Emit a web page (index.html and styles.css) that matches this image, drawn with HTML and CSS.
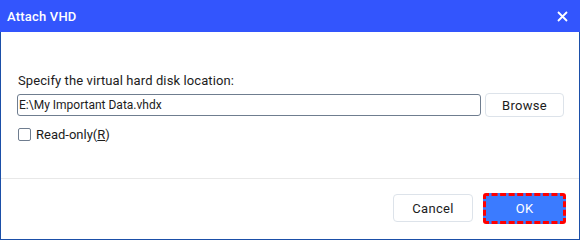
FILE: index.html
```html
<!DOCTYPE html>
<html lang="en">
  <head>
    <meta charset="UTF-8" />
    <meta name="viewport" content="width=device-width, initial-scale=1.0" />
    <title>Attach VHD</title>

    <link rel="stylesheet" href="styles.css">
  </head>

  <body>
    <div class="dialog">
      <div class="titlebar">
        <span class="title">Attach VHD</span>
        <button class="close" aria-label="Close">
          <svg width="11" height="11" viewBox="0 0 11 11">
            <path d="M1 1 L10 10 M10 1 L1 10" stroke="#ffffff" stroke-width="1.8" fill="none" />
          </svg>
        </button>
      </div>

      <div class="content">
        <div class="label">Specify the virtual hard disk location:</div>
        <div class="path-row">
          <input class="path" type="text" value="E:\My Important Data.vhdx" />
          <button class="btn">Browse</button>
        </div>
        <label class="check">
          <span class="box"></span>
          <span>Read-only(<u>R</u>)</span>
        </label>
      </div>

      <div class="footer">
        <button class="btn btn-cancel">Cancel</button>
        <button class="btn btn-ok">OK</button>
      </div>
    </div>
  </body>
</html>
```

FILE: styles.css
```css
body {
  margin: 0;
  background-color: #ffffff;
  font-family: Roboto, "Noto Sans", sans-serif;
  font-size: 13px;
  color: #1c1c1c;
}

.dialog {
  width: 580px;
  height: 240px;
  box-sizing: border-box;
  border: 1px solid #1b4fa8;
  border-top: none;
  display: flex;
  flex-direction: column;
}

.titlebar {
  height: 32px;
  margin: 0 -1px;
  padding: 0 10px 0 7px;
  background-color: #3355fd;
  color: white;
  display: flex;
  align-items: center;
  justify-content: space-between;
}

.title {
  font-size: 13px;
  font-weight: 500;
  letter-spacing: 0.2px;
}

.close {
  background: none;
  border: none;
  padding: 0;
  width: 16px;
  height: 16px;
  display: flex;
  justify-content: center;
  align-items: center;
}

.content {
  height: 146px;
  padding: 41px 15px 0 16px;
  box-sizing: border-box;
}

.label {
  line-height: 16px;
  padding-left: 1px;
  letter-spacing: 0.1px;
}

.path-row {
  display: flex;
  gap: 4px;
  margin-top: 5px;
}

.path {
  width: 464px;
  height: 22px;
  box-sizing: border-box;
  border: 1px solid #6f7d8f;
  border-radius: 3px;
  padding: 0 1px;
  font-family: inherit;
  font-size: 12px;
  color: #1c1c1c;
}

.btn {
  background-color: #ffffff;
  border: 1px solid #dde3ea;
  border-radius: 4px;
  font-family: inherit;
  font-size: 13px;
  color: #1c1c1c;
  letter-spacing: 0.3px;
}

.path-row .btn {
  width: 79px;
  height: 24px;
  margin-top: -1px;
}

.check {
  display: flex;
  align-items: center;
  gap: 5px;
  margin-top: 10px;
  padding-left: 1px;
}

.box {
  width: 13px;
  height: 13px;
  box-sizing: border-box;
  border: 1px solid #6f7d8f;
  border-radius: 2px;
}

.footer {
  flex: 1;
  border-top: 1px solid #e8e8e8;
  display: flex;
  justify-content: flex-end;
  align-items: center;
  gap: 10px;
  padding: 0 13px 2px 0;
}

.btn-cancel {
  width: 80px;
  height: 28px;
}

.btn-ok {
  width: 83px;
  height: 31px;
  background-color: #3b7bff;
  color: white;
  border: 3px dashed #ff0000;
  border-radius: 3px;
}
```
